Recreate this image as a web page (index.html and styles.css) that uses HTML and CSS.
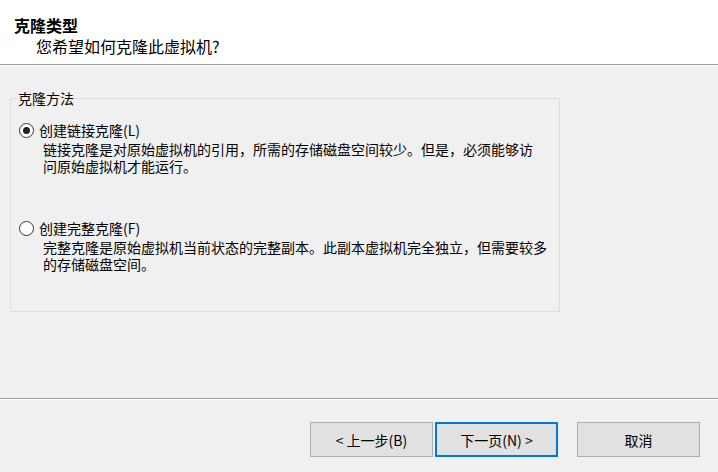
FILE: index.html
```html
<!DOCTYPE html>
<html lang="zh-CN">
<head>
<meta charset="utf-8">
<title>克隆类型</title>
<link rel="stylesheet" href="styles.css">
</head>
<body>
<div class="wizard">
  <header class="head">
    <div class="title">克隆类型</div>
    <div class="subtitle">您希望如何克隆此虚拟机?</div>
  </header>
  <main class="body">
    <fieldset class="group">
      <legend class="legend">克隆方法</legend>
      <div class="option">
        <label class="radio-row"><span class="radio checked"></span><span class="radio-text">创建链接克隆(L)</span></label>
        <p class="desc">链接克隆是对原始虚拟机的引用，所需的存储磁盘空间较少。但是，必须能够访<br>问原始虚拟机才能运行。</p>
      </div>
      <div class="option second">
        <label class="radio-row"><span class="radio"></span><span class="radio-text">创建完整克隆(F)</span></label>
        <p class="desc">完整克隆是原始虚拟机当前状态的完整副本。此副本虚拟机完全独立，但需要较多<br>的存储磁盘空间。</p>
      </div>
    </fieldset>
  </main>
  <footer class="foot">
    <button class="btn">&lt; 上一步(B)</button>
    <button class="btn focus">下一页(N) &gt;</button>
    <button class="btn cancel">取消</button>
  </footer>
</div>
</body>
</html>
```
FILE: styles.css
```css
* { box-sizing: border-box; }
html, body { margin: 0; padding: 0; }
body {
  background: #f0f0f0;
  font-family: "Noto Sans CJK SC", "Microsoft YaHei", sans-serif;
  font-size: 14px;
  color: #000;
}
.wizard {
  width: 718px;
  height: 472px;
  display: flex;
  flex-direction: column;
}
.head {
  height: 65px;
  background: #fff;
  border-bottom: 1px solid #a0a0a0;
  box-shadow: 0 1px 0 #fff;
  padding: 15px 0 0 14px;
  flex: none;
}
.title {
  font-size: 16px;
  line-height: 21px;
  font-weight: bold;
}
.subtitle {
  font-size: 16px;
  line-height: 21px;
  padding-left: 22px;
}
.body {
  flex: 1;
  padding: 25px 0 0 10px;
}
.group {
  margin: 0;
  width: 550px;
  border: 1px solid #dcdcdc;
  padding: 0 0 38px 6px;
  min-width: 0;
}
.legend {
  padding: 0 1px;
  line-height: 16px;
}
.option { margin-top: 16px; padding-left: 2px; }
.option.second { margin-top: 45px; }
.radio-row {
  display: flex;
  align-items: center;
  line-height: 17px;
  height: 17px;
}
.radio {
  width: 15px;
  height: 15px;
  border: 1px solid #333;
  border-radius: 50%;
  background: #fff;
  margin-right: 5px;
  margin-left: 0;
  position: relative;
  flex: none;
}
.radio.checked::after {
  content: "";
  position: absolute;
  left: 3px;
  top: 3px;
  width: 7px;
  height: 7px;
  border-radius: 50%;
  background: #222;
}
.desc {
  margin: 2px 0 0 24px;
  width: 520px;
  line-height: 17px;
  white-space: nowrap;
}
.foot {
  height: 74px;
  flex: none;
  border-top: 1px solid #a0a0a0;
  box-shadow: inset 0 1px 0 #fff;
  display: flex;
  justify-content: flex-end;
  align-items: flex-start;
  padding: 23px 18px 0 0;
  gap: 2px;
}
.btn {
  width: 123px;
  height: 35px;
  background: #e1e1e1;
  border: 1px solid #adadad;
  font-family: inherit;
  font-size: 14px;
  color: #000;
  padding: 0;
  margin: 0;
}
.btn.focus { border: 2px solid #0078d7; }
.btn.cancel { margin-left: 17px; }
```
